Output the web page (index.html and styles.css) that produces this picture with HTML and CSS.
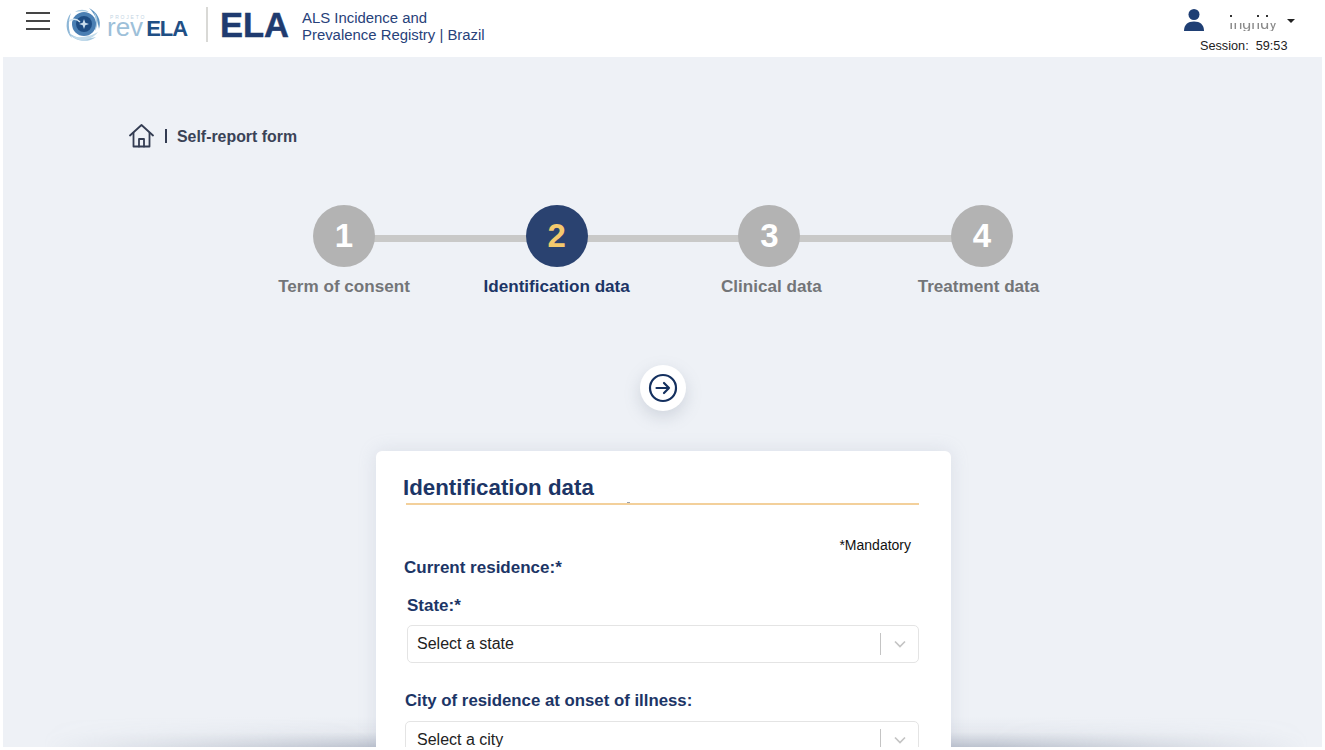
FILE: index.html
```html
<!DOCTYPE html>
<html lang="en">
<head>
<meta charset="utf-8">
<title>revELA - Self-report form</title>
<link rel="stylesheet" href="styles.css">
</head>
<body>
<div class="page">
  <header class="topbar">
    <button class="menu" aria-label="Menu"><span></span><span></span><span></span></button>
    <div class="brand">
      <svg class="swirl" width="38" height="36" viewBox="0 0 38 36">
        <path d="M6 6C0 13 0 25 7 31C3 23 3 14 6 6Z" fill="#8db6d6"/>
        <path d="M3 25C8 34 22 37 31 30C24 32 12 33 3 25Z" fill="#a9cbe2"/>
        <path d="M7 29C14 36 26 34 33 25C26 29 15 32 7 29Z" fill="#c3dceb"/>
        <path d="M24 1C32 5 37 13 34 22C33 14 30 7 24 1Z" fill="#5d93c0"/>
        <path d="M29 5C34 11 33 19 30 24C31 17 31 11 29 5Z" fill="#a9cbe2"/>
        <path d="M10 5C14 2 20 2 24 5C19 4 14 4 10 5Z" fill="#a9cbe2"/>
        <circle cx="19" cy="17" r="12" fill="#4a7fb3"/>
        <circle cx="19" cy="17" r="8" fill="#1e4d84"/>
        <path d="M19 12L20.300 15.700L24 17L20.300 18.300L19 22L17.700 18.300L14 17L17.700 15.700Z" fill="#c9dcec"/>
        <path d="M4 14C9 11 12 12 15 15" fill="none" stroke="#d5e6f1" stroke-width="1.500"/>
      </svg>
      <div class="revela">
        <span class="projeto">PROJETO</span>
        <span class="revela-name"><span class="rev">rev</span><span class="ela-small">ELA</span></span>
      </div>
      <span class="brand-sep"></span>
      <span class="ela-big">ELA</span>
      <div class="brand-text">ALS Incidence and<br>Prevalence Registry | Brazil</div>
    </div>
    <div class="user">
      <div class="user-row">
        <svg class="user-icon" width="20" height="22" viewBox="0 0 20 22">
          <circle cx="10" cy="5.500" r="5.500" fill="#1f3f74"/>
          <path d="M0 22C0 15.500 4 12.500 10 12.500C16 12.500 20 15.500 20 22Z" fill="#1f3f74"/>
        </svg>
        <span class="user-name"><span class="user-text">Ingridy</span><span class="user-mask"></span></span>
        <span class="caret"></span>
      </div>
      <div class="session">Session:&nbsp; 59:53</div>
    </div>
  </header>

  <main class="content">
    <nav class="crumb">
      <svg width="25" height="24" viewBox="0 0 25 24" fill="none" stroke="#333c52" stroke-width="1.800" stroke-linejoin="round" stroke-linecap="round">
        <path d="M1 11.500L12.500 1L24 11.500"/>
        <path d="M4.500 9V22.500H20.500V9"/>
        <path d="M10 22.500V15H15V22.500"/>
      </svg>
      <span class="crumb-sep"></span>
      <span class="crumb-text">Self-report form</span>
    </nav>

    <ol class="stepper">
      <li class="step"><span class="circle">1</span><span class="label">Term of consent</span></li>
      <li class="step active"><span class="circle">2</span><span class="label">Identification data</span></li>
      <li class="step"><span class="circle">3</span><span class="label label-clinical">Clinical data</span></li>
      <li class="step last"><span class="circle">4</span><span class="label label-treatment">Treatment data</span></li>
    </ol>

    <div class="next-wrap">
      <button class="next" aria-label="Next">
        <svg width="30" height="30" viewBox="0 0 30 30" fill="none" stroke="#14305f" stroke-width="2.200" stroke-linecap="round" stroke-linejoin="round">
          <circle cx="15" cy="15" r="13"/>
          <path d="M8.500 15H21M16 10L21 15L16 20"/>
        </svg>
      </button>
    </div>

    <section class="card">
      <h1 class="card-title">Identification data</h1>
      <div class="rule"></div>
      <div class="mandatory">*Mandatory</div>
      <div class="group-title">Current residence:*</div>
      <label class="field-label state-label">State:*</label>
      <div class="select state-select">
        <span class="select-text">Select a state</span>
        <span class="select-sep"></span>
        <svg class="chev" width="12" height="8" viewBox="0 0 12 8" fill="none" stroke="#c4c4c4" stroke-width="1.700"><path d="M1 1.500L6 6.500L11 1.500"/></svg>
      </div>
      <label class="field-label city-label">City of residence at onset of illness:</label>
      <div class="select city-select">
        <span class="select-text">Select a city</span>
        <span class="select-sep"></span>
        <svg class="chev" width="12" height="8" viewBox="0 0 12 8" fill="none" stroke="#c4c4c4" stroke-width="1.700"><path d="M1 1.500L6 6.500L11 1.500"/></svg>
      </div>
    </section>
    <div class="bottom-shade"></div>
  </main>
</div>
</body>
</html>
```
FILE: styles.css
```css
* { box-sizing: border-box; }
html, body { margin: 0; padding: 0; background: #fff; }
body { font-family: "Liberation Sans", Arial, sans-serif; }
.page { width: 1325px; height: 750px; overflow: hidden; display: flex; flex-direction: column; background: #fff; }

.topbar { height: 57px; flex: none; display: flex; align-items: flex-start; padding: 0 30px 0 26px; justify-content: space-between; }
.menu { display: flex; flex-direction: column; gap: 6px; width: 24px; padding: 0; margin: 12px 0 0; border: 0; background: none; }
.menu span { display: block; height: 2px; background: #454545; }
.brand { display: flex; align-items: flex-start; margin-left: 15px; margin-right: auto; }
.swirl { margin-top: 7px; flex: none; }
.revela { margin-left: 4px; margin-top: 15px; display: flex; flex-direction: column; width: 99px; }
.projeto { font-size: 5px; line-height: 5px; letter-spacing: 1.800px; color: #c3d4e3; padding-left: 3px; }
.revela-name { font-size: 26px; line-height: 24px; margin-top: -5px; white-space: nowrap; }
.rev { color: #9dc0d9; }
.ela-small { color: #1f4f85; font-weight: bold; font-size: 22px; letter-spacing: -1px; margin-left: 3px; }
.brand-sep { width: 2px; height: 35px; margin: 7px 0 0 0; background: #d9d9d6; flex: none; }
.ela-big { font-size: 34.500px; line-height: 35px; font-weight: bold; color: #1f3b6f; margin: 8px 0 0 12px; -webkit-text-stroke: 0.500px #1f3b6f; }
.brand-text { font-size: 14.900px; line-height: 17px; color: #28427a; margin: 10px 0 0 13px; white-space: nowrap; }

.user { width: 111px; display: flex; flex-direction: column; margin-top: 9px; }
.user-row { display: flex; align-items: flex-start; }
.user-icon { flex: none; }
.user-name { position: relative; width: 62px; height: 22px; margin: 0 0 0 21px; overflow: hidden; }
.user-text { display: block; font-size: 16px; line-height: 17px; margin-top: 6px; color: #8a8a8a; filter: blur(0.700px); padding-left: 4px; }
.user-mask { position: absolute; left: 0; right: 0; top: 0; height: 14px; background: radial-gradient(circle at 6px 7px, #333 1px, transparent 1.500px), radial-gradient(circle at 33px 7px, #333 1px, transparent 1.500px), radial-gradient(circle at 42px 7px, #333 1px, transparent 1.500px), #fff; }
.caret { width: 0; height: 0; margin: 10px 0 0 0; border: solid transparent; border-width: 4px 4.500px 0; border-top-color: #222; }
.session { font-size: 12.700px; line-height: 14px; color: #222; margin: 8px 0 0 16px; white-space: nowrap; }

.content { position: relative; flex: none; height: 690px; margin: 0 3px; background: #eef1f6; overflow: hidden; }
.crumb { display: flex; align-items: center; height: 24px; margin: 67px 0 0 126px; }
.crumb-sep { width: 2px; height: 14px; background: #333c52; margin-left: 11px; }
.crumb-text { font-size: 15.900px; line-height: 24px; padding-top: 1px; font-weight: bold; color: #3a4357; margin-left: 10px; }

.stepper { list-style: none; margin: 57px 0 0; padding: 0 0 0 1px; display: flex; justify-content: center; }
.step { position: relative; width: 212.670px; display: flex; flex-direction: column; align-items: center; }
.step::after { content: ""; position: absolute; left: 50%; top: 30px; width: 100%; height: 7px; background: #c9c9c8; }
.step.last::after { display: none; }
.circle { position: relative; z-index: 1; width: 62px; height: 62px; border-radius: 50%; background: #b3b3b3; color: #fff; font-size: 33px; line-height: 62px; font-weight: bold; text-align: center; }
.label { margin-top: 10px; font-size: 17.100px; line-height: 20px; font-weight: bold; color: #737578; white-space: nowrap; }
.label-clinical { margin-left: 4px; }
.label-treatment { margin-right: 7px; }
.active .circle { background: #2a4270; color: #f4c96d; }
.active .label { color: #1c3566; }

.next-wrap { display: flex; justify-content: center; margin-top: 68px; }
.next { width: 46px; height: 46px; padding: 0; border: 0; border-radius: 50%; background: #fff; display: flex; align-items: center; justify-content: center; box-shadow: 0 6px 16px rgba(120, 130, 150, 0.250); }

.card { position: relative; z-index: 2; width: 575px; height: 400px; margin: 40px 0 0 373px; padding: 24px 32px 0 27px; background: #fff; border-radius: 6px; box-shadow: 0 0 18px rgba(150, 160, 180, 0.220); }
.card-title { margin: 0; font-size: 22.300px; line-height: 25px; font-weight: bold; color: #1c3566; }
.rule { position: relative; height: 2px; margin: 3px 0 0 3px; background: #f3d09b; }
.rule::after { content: ""; position: absolute; left: 221px; top: -1px; width: 3px; height: 1px; background: #9aa3b0; }
.mandatory { margin: 32px 8px 0 0; font-size: 14px; line-height: 16px; text-align: right; color: #111; }
.group-title { margin: 5px 0 0 1px; font-size: 17px; line-height: 20px; font-weight: bold; color: #1c3566; }
.field-label { display: block; font-size: 17px; line-height: 20px; font-weight: bold; color: #1c3566; }
.state-label { margin: 18px 0 0 4px; }
.city-label { margin: 28px 0 0 2px; font-size: 16.800px; }
.select { display: flex; align-items: center; height: 38px; padding: 0 12px 0 9px; background: #fff; border: 1px solid #e4e4e4; border-radius: 5px; }
.state-select { margin: 9px 0 0 4px; }
.city-select { margin: 10px 0 0 2px; padding-left: 11px; }
.select-text { flex: 1; font-size: 16px; color: #222; }
.select-sep { width: 1px; height: 22px; background: #c4c4c4; margin-right: 13px; }

.bottom-shade { position: absolute; left: 0; right: 0; bottom: 0; height: 30px; background: linear-gradient(to bottom, rgba(130, 140, 160, 0) 0%, rgba(130, 140, 160, 0.080) 50%, rgba(130, 140, 160, 0.450) 100%); -webkit-mask-image: linear-gradient(to right, transparent 3%, #000 28%, #000 75%, transparent 99%); mask-image: linear-gradient(to right, transparent 3%, #000 28%, #000 75%, transparent 99%); }
```
